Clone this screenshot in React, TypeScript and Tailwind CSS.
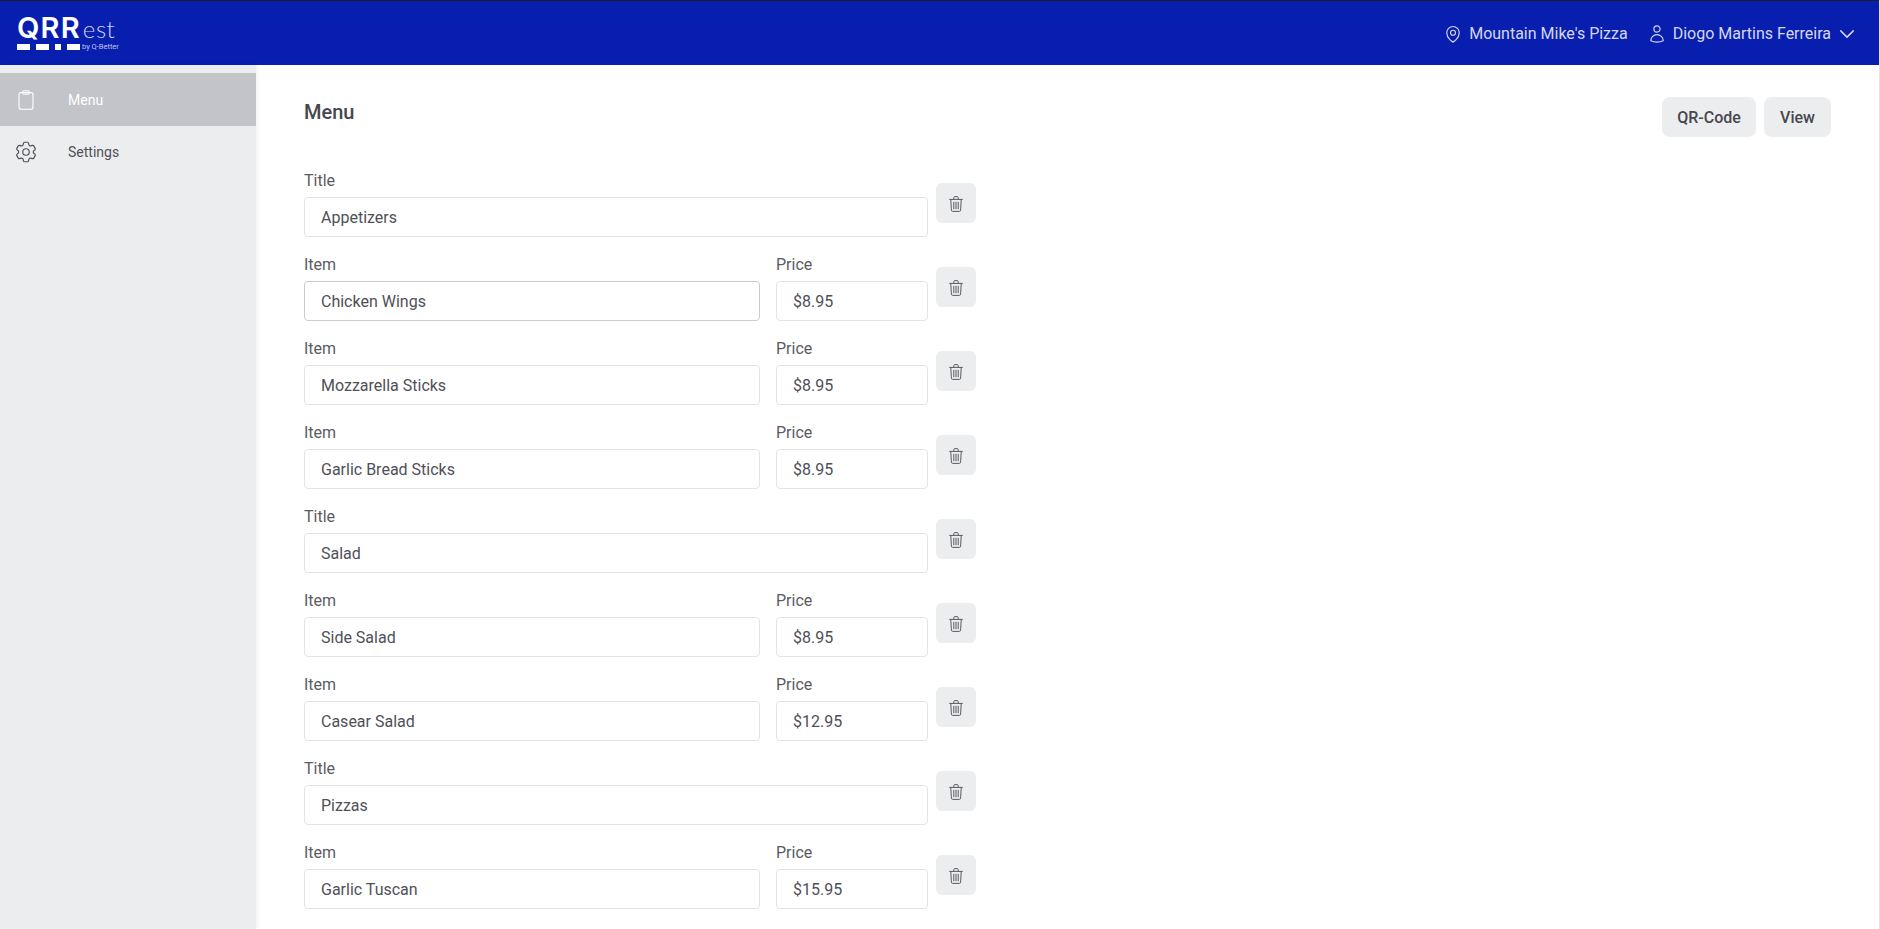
import { HiOutlineChevronDown, HiOutlineCog6Tooth, HiOutlineMapPin, HiOutlineUser } from "react-icons/hi2";

const rows = [
  { kind: "title", name: "Appetizers" },
  { kind: "item", name: "Chicken Wings", price: "$8.95", dark: true },
  { kind: "item", name: "Mozzarella Sticks", price: "$8.95" },
  { kind: "item", name: "Garlic Bread Sticks", price: "$8.95" },
  { kind: "title", name: "Salad" },
  { kind: "item", name: "Side Salad", price: "$8.95" },
  { kind: "item", name: "Casear Salad", price: "$12.95" },
  { kind: "title", name: "Pizzas" },
  { kind: "item", name: "Garlic Tuscan", price: "$15.95" },
];

function TrashIcon() {
  return (
    <svg viewBox="0 0 14 16" className="w-[14px] h-4 mt-[2px]" fill="none" stroke="#5b5b63" strokeWidth="1" strokeLinecap="round" strokeLinejoin="round">
      <path d="M0.6 3.4h12.8" />
      <path d="M4.8 3.2V1.6c0-.6.4-1 1-1h2.4c.6 0 1 .4 1 1v1.6" />
      <path d="M1.8 3.6l.6 10.6c0 .7.5 1.2 1.2 1.2h6.8c.7 0 1.2-.5 1.2-1.2l.6-10.6" />
      <path d="M4.8 6.2v6.6M7 6.2v6.6M9.2 6.2v6.6" />
    </svg>
  );
}

function ClipboardIcon() {
  return (
    <svg viewBox="0 0 16 20" className="w-4 h-5" fill="none" stroke="white" strokeWidth="1.1" strokeLinejoin="round">
      <rect x="1" y="2.6" width="14" height="16.6" rx="2" />
      <rect x="4.6" y="0.8" width="6.8" height="3.4" rx="1.4" />
    </svg>
  );
}

function Field({ label, value, dark, className }: { label: string; value: string; dark?: boolean; className: string }) {
  return (
    <label className={`block ${className}`}>
      <span className="block text-base leading-6 mb-1 text-[#5b5b63]">{label}</span>
      <input
        type="text"
        defaultValue={value}
        className={`w-full h-10 rounded border px-4 text-base text-[#505058] outline-none ${dark ? "border-[#cbcbd2]" : "border-[#e4e4e7]"}`}
      />
    </label>
  );
}

export default function App() {
  return (
    <div className="w-screen h-screen overflow-hidden flex flex-col bg-white font-['Roboto',sans-serif] border-r border-r-[#e4e4e7]">
      <header className="h-[65px] shrink-0 bg-[#081eaf] border-t border-t-[#1c1c2a] flex items-center justify-between pl-[17px] pr-[22px] text-[#d5d7ec]">
        <div className="flex flex-col -mt-[3px]">
          <div className="flex items-baseline text-white">
            <span className="font-['Inter',sans-serif] font-semibold text-[29px] tracking-[1.2px] leading-[28px]">QRR</span>
            <span className="font-['Lato',sans-serif] font-light text-[24px] tracking-[0.5px] leading-[28px] ml-[2px] text-[#d0d4f4]">est</span>
          </div>
          <div className="flex items-center gap-[6px] h-[6px] mt-[1px]">
            <span className="w-[13px] h-[6px] bg-white" />
            <span className="w-[13px] h-[6px] bg-white" />
            <span className="w-[6px] h-[6px] bg-white" />
            <span className="w-[13px] h-[6px] bg-white" />
            <span className="text-[7.5px] text-[#c0c4ee] -ml-[4px] whitespace-nowrap">by Q-Better</span>
          </div>
        </div>
        <div className="flex items-center text-base pt-[1px]">
          <HiOutlineMapPin className="w-5 h-5 stroke-[1.4]" />
          <span className="ml-[6px]">Mountain Mike's Pizza</span>
          <HiOutlineUser className="ml-[19px] w-5 h-5 stroke-[1.4]" />
          <span className="ml-[6px]">Diogo Martins Ferreira</span>
          <HiOutlineChevronDown className="ml-[6px] w-5 h-5 stroke-[1.7]" />
        </div>
      </header>
      <div className="flex flex-1 min-h-0">
        <aside className="w-64 shrink-0 bg-[#ecedef] pt-2 shadow-[2px_0_4px_rgba(0,0,0,0.05)]">
          <a className="flex items-center h-[53px] bg-[#c3c4ca] text-white text-sm">
            <span className="w-[68px] pl-[18px]"><ClipboardIcon /></span>
            Menu
          </a>
          <a className="flex items-center h-[53px] text-[#505058] text-sm -mt-[1px]">
            <span className="w-[68px] pl-[13px]"><HiOutlineCog6Tooth className="w-[26px] h-[26px] stroke-[1.1]" /></span>
            Settings
          </a>
        </aside>
        <main className="flex-1 pl-12 pr-12 pt-8">
          <div className="flex justify-between mb-8">
            <h1 className="text-xl leading-[30px] h-8 font-medium text-[#47474f]">Menu</h1>
            <div className="flex gap-2">
              <button className="h-10 pt-[2px] w-[94px] rounded-lg bg-[#ecedef] text-base font-medium text-[#47474f]">QR-Code</button>
              <button className="h-10 pt-[2px] w-[67px] rounded-lg bg-[#ecedef] text-base font-medium text-[#47474f]">View</button>
            </div>
          </div>
          <div className="flex flex-col gap-4 w-[672px]">
            {rows.map((r, i) => (
              <div key={i} className="flex gap-2">
                <div className="flex gap-4 w-[624px]">
                  {r.kind === "title" ? (
                    <Field label="Title" value={r.name} className="w-full" />
                  ) : (
                    <>
                      <Field label="Item" value={r.name} dark={r.dark} className="w-[456px]" />
                      <Field label="Price" value={r.price ?? ""} className="w-[152px]" />
                    </>
                  )}
                </div>
                <button className="mt-[14px] w-10 h-10 rounded-md bg-[#ecedef] flex items-center justify-center">
                  <TrashIcon />
                </button>
              </div>
            ))}
          </div>
        </main>
      </div>
    </div>
  );
}
